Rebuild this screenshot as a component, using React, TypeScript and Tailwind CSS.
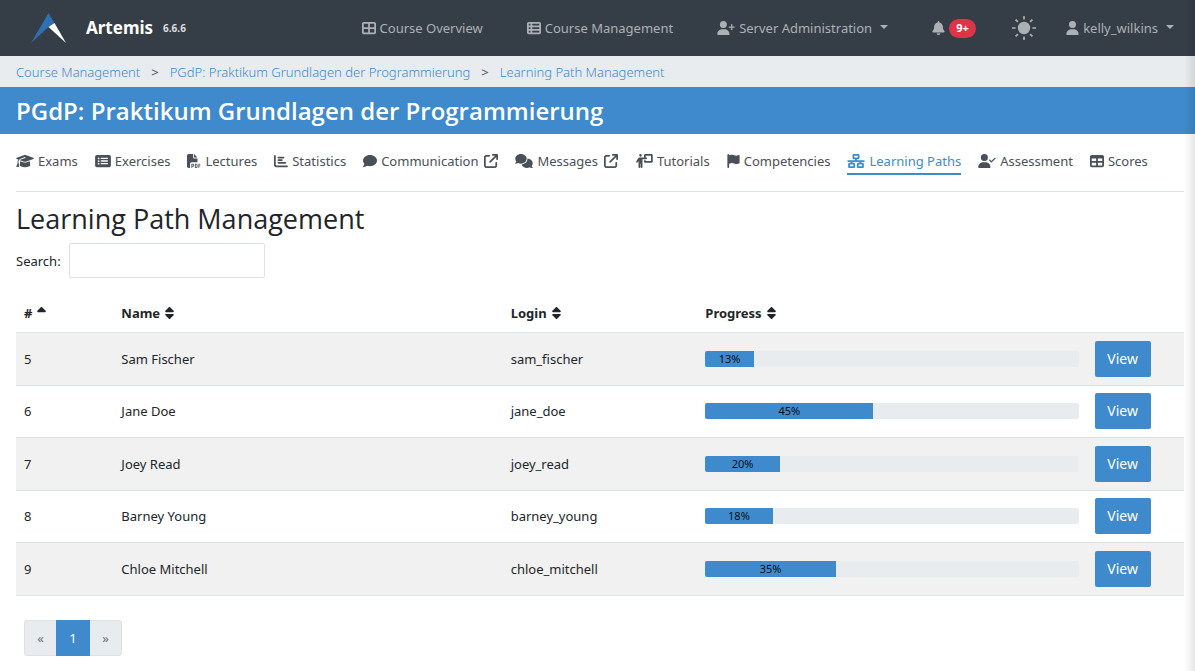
import type { ReactNode } from "react";
import type { IconType } from "react-icons";
import {
  FaArrowUpRightFromSquare,
  FaBell,
  FaChartBar,
  FaComment,
  FaComments,
  FaFilePdf,
  FaFlag,
  FaGraduationCap,
  FaNetworkWired,
  FaPersonChalkboard,
  FaRectangleList,
  FaSort,
  FaSortUp,
  FaTable,
  FaTableCellsLarge,
  FaTableList,
  FaUser,
  FaUserCheck,
  FaUserPlus,
} from "react-icons/fa6";

type Tab = { label: string; icon: IconType; size?: string; external?: boolean; active?: boolean };

const square = "h-[14px] w-[14px] shrink-0";
const narrow = "h-[14px] w-[13px] shrink-0";
const medium = "h-[14px] w-4 shrink-0";
const wide = "h-[14px] w-[18px] shrink-0";

const tabs: Tab[] = [
  { label: "Exams", icon: FaGraduationCap, size: wide },
  { label: "Exercises", icon: FaRectangleList, size: medium },
  { label: "Lectures", icon: FaFilePdf },
  { label: "Statistics", icon: FaChartBar },
  { label: "Communication", icon: FaComment, external: true },
  { label: "Messages", icon: FaComments, size: wide, external: true },
  { label: "Tutorials", icon: FaPersonChalkboard, size: wide },
  { label: "Competencies", icon: FaFlag, size: narrow },
  { label: "Learning Paths", icon: FaNetworkWired, size: wide, active: true },
  { label: "Assessment", icon: FaUserCheck, size: wide },
  { label: "Scores", icon: FaTable },
];

const rows = [
  { id: 5, name: "Sam Fischer", login: "sam_fischer", progress: 13 },
  { id: 6, name: "Jane Doe", login: "jane_doe", progress: 45 },
  { id: 7, name: "Joey Read", login: "joey_read", progress: 20 },
  { id: 8, name: "Barney Young", login: "barney_young", progress: 18 },
  { id: 9, name: "Chloe Mitchell", login: "chloe_mitchell", progress: 35 },
];

const crumbs = ["Course Management", "PGdP: Praktikum Grundlagen der Programmierung", "Learning Path Management"];

function Logo() {
  return (
    <svg viewBox="0 0 36 31" className="h-[31px] w-9" aria-hidden="true">
      <path d="M17.5 0 L23.5 10 L17.5 14 L0 30 Z" fill="#2f6fb3" />
      <path d="M23.5 10 L35 30 L17.5 14 Z" fill="#fff" />
    </svg>
  );
}

function Sun() {
  return (
    <svg viewBox="0 0 24 24" className="size-6" stroke="currentColor" strokeWidth="1.7" aria-hidden="true">
      <circle cx="12" cy="12" r="6.2" fill="currentColor" stroke="none" />
      <path d="M12 0v3.4M12 20.6V24M0 12h3.6M20.4 12H24M3.6 3.6l2.3 2.3M18.1 18.1l2.3 2.3M3.6 20.4l2.3-2.3M18.1 5.9l2.3-2.3" />
    </svg>
  );
}

function Caret() {
  return <span className="mb-0.5 ml-1 border-x-4 border-t-4 border-x-transparent border-t-current" />;
}

function NavLink({ icon: Icon, size = square, children }: { icon: IconType; size?: string; children: ReactNode }) {
  return (
    <a href="#" className="flex items-center gap-1 whitespace-nowrap">
      <Icon className={size} />
      {children}
    </a>
  );
}

function SortHeader({ label, sorted }: { label: string; sorted?: boolean }) {
  const Icon = sorted ? FaSortUp : FaSort;
  return (
    <th className="px-2 py-0 text-left font-bold">
      <button type="button" className="flex items-center gap-[5px] font-bold">
        {label}
        <Icon className="h-[14px] w-[9px]" />
      </button>
    </th>
  );
}

export default function App() {
  return (
    <div className="relative min-h-screen bg-white pb-[15px] font-['Noto_Sans','Open_Sans',sans-serif] text-[13px] leading-5 text-[#212529]">
      <nav className="flex h-14 items-center bg-[#353d47] pr-[21px] pl-[31px] text-[#adb1b5]">
        <a href="#" className="flex items-center text-white">
          <Logo />
          <span className="ml-[19px] text-[17px] font-bold">Artemis</span>
          <span className="ml-[10px] text-[10px] font-bold text-[#dcdee0]">6.6.6</span>
        </a>
        <div className="ml-auto flex items-center gap-11">
          <NavLink icon={FaTableCellsLarge}>Course Overview</NavLink>
          <NavLink icon={FaTableList}>Course Management</NavLink>
          <NavLink icon={FaUserPlus} size={wide}>
            Server Administration
            <Caret />
          </NavLink>
        </div>
        <button type="button" aria-label="Notifications" className="ml-11 flex items-center gap-1">
          <FaBell className={narrow} />
          <span className="flex h-[19px] w-[27px] items-center justify-center rounded-full bg-[#dc3545] text-[11px] font-bold text-white">
            9+
          </span>
        </button>
        <button type="button" aria-label="Switch theme" className="mr-[30px] ml-9">
          <Sun />
        </button>
        <NavLink icon={FaUser} size={narrow}>
          kelly_wilkins
          <Caret />
        </NavLink>
      </nav>

      <ol className="flex h-[31px] items-center gap-[11px] bg-[#e8ecef] px-4 font-light">
        {crumbs.map((crumb, i) => (
          <li key={crumb} className="flex gap-[11px]">
            {i > 0 && <span className="font-normal text-[#495057]">&gt;</span>}
            <a href="#" className="text-[#3e8acc]">
              {crumb}
            </a>
          </li>
        ))}
      </ol>

      <header className="flex h-[47px] items-center bg-[#3e8acc] px-4">
        <h1 className="font-['Open_Sans','Noto_Sans',sans-serif] text-[24px] leading-8 font-semibold text-white">
          PGdP: Praktikum Grundlagen der Programmierung
        </h1>
      </header>

      <main className="pr-[11px] pl-4">
        <div className="flex h-[58px] items-center gap-[17px] border-b border-[#dee2e6] pb-1 text-[#495057]">
          {tabs.map(({ label, icon: Icon, size = square, external, active }) => (
            <a
              key={label}
              href="#"
              className={
                active
                  ? "flex items-center gap-1 border-b-2 border-[#3e8acc] pt-1 pb-0.5 whitespace-nowrap text-[#3e8acc]"
                  : "flex items-center gap-1 whitespace-nowrap"
              }
            >
              <Icon className={size} />
              {label}
              {external && <FaArrowUpRightFromSquare className="ml-0.5 h-[14px] w-[14px] shrink-0" />}
            </a>
          ))}
        </div>

        <h2 className="mt-[7px] font-['Open_Sans','Noto_Sans',sans-serif] text-[27px] leading-10">
          Learning Path Management
        </h2>
        <div className="mt-1 flex items-center gap-2">
          <label htmlFor="search">Search:</label>
          <input id="search" type="text" className="h-[35px] w-[196px] rounded-[2px] border border-[#dee2e6] px-3" />
        </div>

        <table className="mt-4 w-full table-fixed border-collapse">
          <colgroup>
            <col className="w-1/12" />
            <col className="w-4/12" />
            <col className="w-2/12" />
            <col className="w-4/12" />
            <col className="w-1/12" />
          </colgroup>
          <thead>
            <tr className="h-[38px] border-b border-[#dee2e6]">
              <SortHeader label="#" sorted />
              <SortHeader label="Name" />
              <SortHeader label="Login" />
              <SortHeader label="Progress" />
              <td />
            </tr>
          </thead>
          <tbody>
            {rows.map((row) => (
              <tr
                key={row.id}
                className="border-b border-[#dee2e6] odd:h-[53px] odd:bg-[#f1f1f1] even:h-[52px]"
              >
                <td className="px-2">{row.id}</td>
                <td className="px-2">{row.name}</td>
                <td className="px-2">{row.login}</td>
                <td className="px-2">
                  <div className="h-4 overflow-hidden rounded-[2px] bg-[#e8ecef]">
                    <div
                      className="h-4 bg-[#3e8acc] text-center text-[11px] leading-4 text-[#0b1016]"
                      style={{ width: `${row.progress}%` }}
                    >
                      {row.progress}%
                    </div>
                  </div>
                </td>
                <td className="px-2">
                  <a
                    href="#"
                    className="flex h-9 w-14 items-center justify-center rounded-[2px] bg-[#3e8acc] text-sm text-white"
                  >
                    View
                  </a>
                </td>
              </tr>
            ))}
          </tbody>
        </table>

        <div className="mt-6 ml-2 flex h-9 w-fit overflow-hidden rounded-[3px] text-[#6c757d]">
          <button type="button" aria-label="Previous page" className="w-8 rounded-l-[3px] border border-r-0 border-[#dee2e6] bg-[#e8ecef]">
            «
          </button>
          <button type="button" className="w-[34px] bg-[#3e8acc] text-white">
            1
          </button>
          <button type="button" aria-label="Next page" className="w-8 rounded-r-[3px] border border-l-0 border-[#dee2e6] bg-[#e8ecef]">
            »
          </button>
        </div>
      </main>

      <div className="pointer-events-none absolute inset-y-0 right-0 w-2.5 bg-linear-to-l from-black/10 to-transparent" />
    </div>
  );
}
